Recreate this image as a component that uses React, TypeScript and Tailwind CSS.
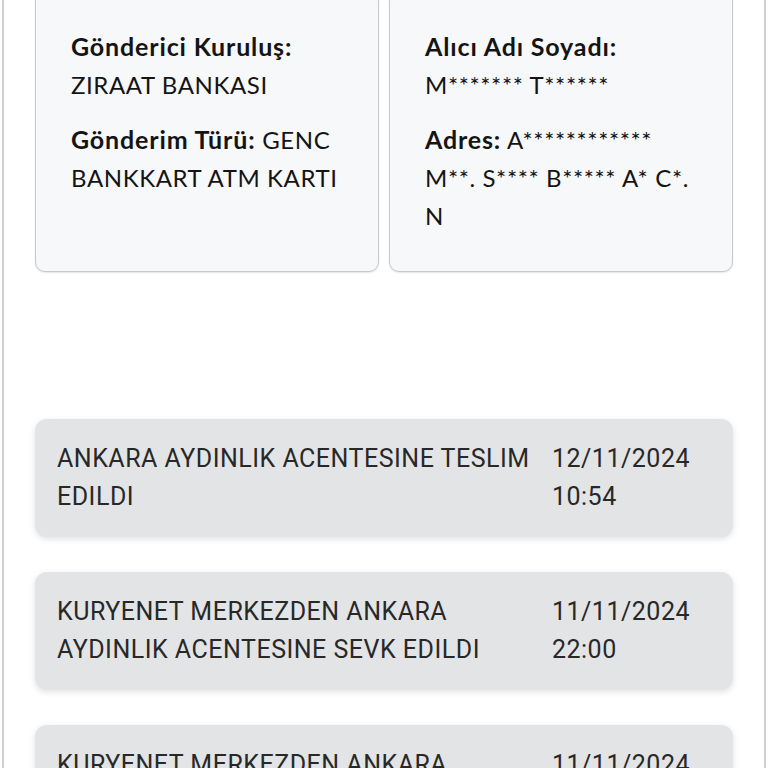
import React from "react";

type Movement = { text: string; date: string; time: string };

const movements: Movement[] = [
  { text: "ANKARA AYDINLIK ACENTESINE TESLIM\nEDILDI", date: "12/11/2024", time: "10:54" },
  { text: "KURYENET MERKEZDEN ANKARA\nAYDINLIK ACENTESINE SEVK EDILDI", date: "11/11/2024", time: "22:00" },
  { text: "KURYENET MERKEZDEN ANKARA\nAYDINLIK ACENTESINE SEVK EDILDI", date: "11/11/2024", time: "22:00" },
];

function InfoCard({ children }: { children: React.ReactNode }) {
  return (
    <div className="rounded-[10px] border-[1.5px] border-[#c8c9cb] bg-[#f7f8fa] px-[35px] py-[36px] shadow-[0_1px_2px_rgba(0,0,0,0.1)]">
      {children}
    </div>
  );
}

function Label({ children }: { children: React.ReactNode }) {
  return <span className="text-[25px] leading-[0] font-bold tracking-[0.85px]">{children}</span>;
}

export default function App() {
  return (
    <div className="h-[768px] overflow-hidden bg-white px-[2px]">
      <div className="min-h-full border-x-2 border-[#cfcfcf] px-[31px] font-['Lato',sans-serif] text-[#141414]">
        <div className="mt-[-9px] grid grid-cols-2 gap-[10px] text-[24px] leading-[38px] tracking-[0.6px] whitespace-nowrap">
          <InfoCard>
            <p>
              <Label>Gönderici Kuruluş:</Label>
              <br />
              ZIRAAT BANKASI
            </p>
            <p className="mt-[17px]">
              <Label>Gönderim Türü:</Label> GENC
              <br />
              BANKKART ATM KARTI
            </p>
          </InfoCard>
          <InfoCard>
            <p>
              <Label>Alıcı Adı Soyadı:</Label>
              <br />
              M******* T******
            </p>
            <p className="mt-[17px]">
              <Label>Adres:</Label> A************
              <br />
              M**. S**** B***** A* C*.
              <br />N
            </p>
          </InfoCard>
        </div>

        <div className="mt-[147px] flex flex-col gap-[35px] font-['Roboto',sans-serif] text-[25px] leading-[38px] tracking-[0.5px] text-[#282828]">
          {movements.map((m, i) => (
            <div
              key={i}
              className="flex justify-between rounded-[12px] bg-[#e3e4e6] py-[21px] pl-[22px] pr-[43px] shadow-[0_2px_6px_rgba(0,0,0,0.12)]"
            >
              <p className="whitespace-pre-line">{m.text}</p>
              <p>
                {m.date}
                <br />
                {m.time}
              </p>
            </div>
          ))}
        </div>
      </div>
    </div>
  );
}
